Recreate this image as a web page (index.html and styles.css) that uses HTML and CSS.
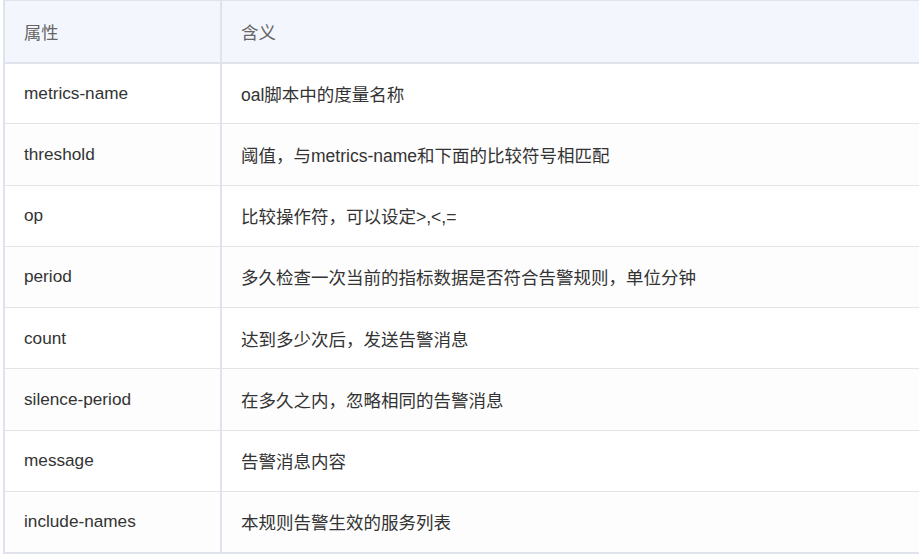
FILE: index.html
```html
<!DOCTYPE html>
<html lang="zh-CN">
<head>
  <meta charset="UTF-8" />
  <meta name="viewport" content="width=device-width, initial-scale=1.0"/>
  <title>告警规则属性</title>
  <link rel="stylesheet" href="styles.css">
</head>
<body>
  <div class="table-wrap">
    <table class="rules">
      <thead>
        <tr><th class="col-key">属性</th><th>含义</th></tr>
      </thead>
      <tbody>
        <tr><td class="col-key">metrics-name</td><td>oal脚本中的度量名称</td></tr>
        <tr><td class="col-key">threshold</td><td>阈值，与metrics-name和下面的比较符号相匹配</td></tr>
        <tr><td class="col-key">op</td><td>比较操作符，可以设定&gt;,&lt;,=</td></tr>
        <tr><td class="col-key">period</td><td>多久检查一次当前的指标数据是否符合告警规则，单位分钟</td></tr>
        <tr><td class="col-key">count</td><td>达到多少次后，发送告警消息</td></tr>
        <tr><td class="col-key">silence-period</td><td>在多久之内，忽略相同的告警消息</td></tr>
        <tr><td class="col-key">message</td><td>告警消息内容</td></tr>
        <tr><td class="col-key">include-names</td><td>本规则告警生效的服务列表</td></tr>
      </tbody>
    </table>
  </div>
</body>
</html>
```

FILE: styles.css
```css
* {
  margin: 0;
  padding: 0;
  box-sizing: border-box;
}
body {
  font-family: 'Liberation Sans', 'Noto Sans CJK SC', sans-serif;
  font-size: 17.5px;
  color: #333;
  background: #fff;
  overflow: hidden;
}
.table-wrap {
  padding-left: 3px;
  width: 960px;
}
.rules {
  width: 100%;
  border-collapse: collapse;
  border-left: 2px solid #e1e3ec;
  border-top: 1px solid #e1e3ec;
  border-bottom: 2px solid #e1e3ec;
}
.rules th,
.rules td {
  text-align: left;
  padding: 0 20px 0 19px;
  height: 61.25px;
  font-weight: normal;
  vertical-align: middle;
}
.rules th {
  background: #f4f6fd;
  color: #666;
  height: 62px;
  border-bottom: 2px solid #e1e3ec;
}
.rules td {
  border-bottom: 1px solid #e4e4e6;
}
.rules tbody tr:nth-child(even) td {
  background: #fdfdfd;
}
.rules .col-key {
  width: 217px;
  font-size: 17.2px;
  border-right: 2px solid #e1e3ec;
}
```
